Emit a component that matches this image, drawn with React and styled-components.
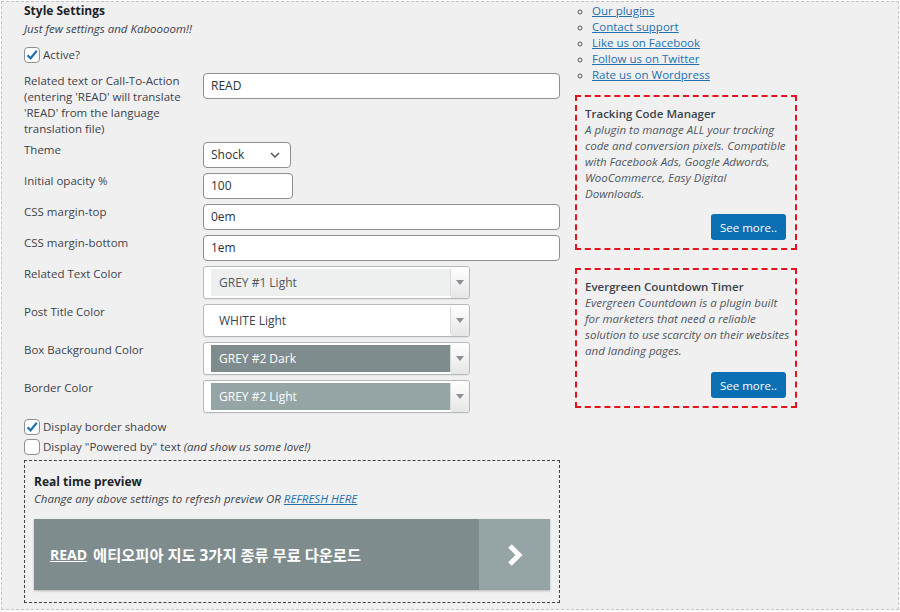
import React from 'react';
import styled, { createGlobalStyle } from 'styled-components';

const GlobalStyle = createGlobalStyle`
  body {
    margin: 0;
    background: #fff;
    font-family: "Open Sans", "Noto Sans", sans-serif;
    font-size: 11.5px;
    line-height: 16px;
    color: #3c434a;
  }
  * { box-sizing: border-box; }
`;

const Frame = styled.div`
  margin: 1px 1px 0;
  height: 609px;
  border: 1px dashed #c3c4c7;
  background: #f0f0f1;
  overflow: hidden;
  display: flex;
  gap: 15px;
  padding: 1px 0 0 22px;
`;

const Settings = styled.div`
  width: 536px;
  display: flex;
  flex-direction: column;
`;

const Heading = styled.h3`
  margin: 0;
  font-size: 12px;
  font-weight: 700;
  line-height: 16px;
  color: #1d2327;
`;

const Note = styled.p`
  margin: 2px 0 0;
  font-style: italic;
  color: #3c434a;
`;

const CheckRow = styled.label`
  display: flex;
  align-items: center;
  height: 16px;
  margin-top: ${p => p.$top || 0}px;
`;

const Box = styled.span`
  width: 16px;
  height: 16px;
  margin-right: 3px;
  border: 1px solid #8c8f94;
  border-radius: 4px;
  background: #fff;
  display: flex;
  align-items: center;
  justify-content: center;
  flex: none;
`;

const Form = styled.div`
  margin-top: 10px;
  display: grid;
  grid-template-columns: 179px 1fr;
  row-gap: 5px;
  align-items: start;
`;

const Label = styled.div`
  line-height: 16px;
`;

const TextInput = styled.div`
  width: ${p => p.$width || '100%'};
  height: 26px;
  border: 1px solid #8c8f94;
  border-radius: 4px;
  background: #fff;
  padding: 0 7px;
  display: flex;
  align-items: center;
  color: #2c3338;
  font-size: 12px;
`;

const Select = styled(TextInput)`
  justify-content: space-between;
  padding-right: 10px;
`;

const ColorSelect = styled.div`
  width: 267px;
  height: 33px;
  border: 1px solid #b4b9be;
  border-radius: 3px;
  background: #fff;
  display: flex;
  padding: 2px 0 2px 7px;
  box-shadow: 0 1px 1px rgba(0, 0, 0, 0.05);
`;

const Swatch = styled.div`
  flex: 1;
  background: ${p => p.$bg};
  color: ${p => p.$color};
  display: flex;
  align-items: center;
  padding-left: 8px;
  font-size: 12px;
  border-right: 1px solid #d8dbdd;
`;

const Arrow = styled.div`
  width: 18px;
  display: flex;
  align-items: center;
  justify-content: center;
  background: linear-gradient(#fff, #e6e6e6);
  margin: -2px 0;
  border-radius: 0 3px 3px 0;
`;

const Preview = styled.div`
  margin-top: 5px;
  border: 1px dashed #3c434a;
  padding: 13px 9px 12px 9px;
`;

const PreviewTitle = styled.div`
  font-weight: 700;
  font-size: 12px;
  color: #1d2327;
`;

const PreviewNote = styled.div`
  font-style: italic;
  margin-top: 1px;
  a { color: #2271b1; }
`;

const Banner = styled.div`
  margin-top: 12px;
  height: 71px;
  display: flex;
  box-shadow: 0 1px 2px rgba(0, 0, 0, 0.25);
`;

const BannerText = styled.div`
  flex: 1;
  background: #7f8c8d;
  color: #fff;
  display: flex;
  align-items: center;
  padding-left: 16px;
  font-family: "Open Sans", "Noto Sans CJK KR", sans-serif;
  font-weight: 700;
  font-size: 15.3px;
  span { text-decoration: underline; margin-right: 6px; font-size: 14px; }
`;

const BannerGo = styled.div`
  width: 71px;
  background: #95a5a6;
  display: flex;
  align-items: center;
  justify-content: center;
`;

const Side = styled.div`
  width: 222px;
  display: flex;
  flex-direction: column;
`;

const Links = styled.ul`
  margin: 0;
  padding-left: 17px;
  list-style: circle;
  li::marker { color: #50575e; font-size: 10px; }
  a { color: #2271b1; }
`;

const Promo = styled.div`
  margin-top: ${p => p.$top}px;
  border: 2px dashed #e3141c;
  padding: 9px 9px 8px 8px;
  display: flex;
  flex-direction: column;
`;

const PromoTitle = styled.div`
  font-weight: 600;
  color: #3c434a;
`;

const PromoText = styled.div`
  font-style: italic;
  color: #50575e;
  margin-right: -6px;
  white-space: nowrap;
`;

const SeeMore = styled.button`
  align-self: flex-end;
  margin-top: ${p => p.$top}px;
  height: 26px;
  padding: 0 9px;
  border: 0;
  border-radius: 3px;
  background: #0a6fb3;
  color: #fff;
  font-family: inherit;
  font-size: 11.5px;
`;

const Tick = () => (
  <svg width="14" height="14" viewBox="0 0 14 14">
    <path d="M2.5 7.2 L5.6 10.3 L11.8 2.8" fill="none" stroke="#2271b1" strokeWidth="2.2" />
  </svg>
);

const Check = ({ checked, top, children }) => (
  <CheckRow $top={top}>
    <Box>{checked && <Tick />}</Box>
    <span>{children}</span>
  </CheckRow>
);

const colorRows = [
  { label: 'Related Text Color', value: 'GREY #1 Light', bg: '#eef0f0', color: '#50575e' },
  { label: 'Post Title Color', value: 'WHITE Light', bg: '#fff', color: '#3c434a' },
  { label: 'Box Background Color', value: 'GREY #2 Dark', bg: '#7f8c8d', color: '#fff' },
  { label: 'Border Color', value: 'GREY #2 Light', bg: '#95a5a6', color: '#fff' },
];

// descriptions keep the plugin page's own line breaks
const promos = [
  {
    title: 'Tracking Code Manager',
    lines: [
      'A plugin to manage ALL your tracking',
      'code and conversion pixels. Compatible',
      'with Facebook Ads, Google Adwords,',
      'WooCommerce, Easy Digital',
      'Downloads.',
    ],
    top: 12,
    btn: 12,
  },
  {
    title: 'Evergreen Countdown Timer',
    lines: [
      'Evergreen Countdown is a plugin built',
      'for marketers that need a reliable',
      'solution to use scarcity on their websites',
      'and landing pages.',
    ],
    top: 18,
    btn: 13,
  },
];

const App = () => (
  <>
    <GlobalStyle />
    <Frame>
      <Settings>
        <Heading>Style Settings</Heading>
        <Note>Just few settings and Kaboooom!!</Note>
        <Check checked top={10}>Active?</Check>

        <Form>
          <Label>
            Related text or Call-To-Action<br />
            (entering 'READ' will translate<br />
            'READ' from the language<br />
            translation file)
          </Label>
          <TextInput>READ</TextInput>

          <Label>Theme</Label>
          <Select $width="88px">
            Shock
            <svg width="10" height="6" viewBox="0 0 10 6">
              <path d="M1 1 L5 5 L9 1" fill="none" stroke="#50575e" strokeWidth="1.5" />
            </svg>
          </Select>

          <Label>Initial opacity %</Label>
          <TextInput $width="90px">100</TextInput>

          <Label>CSS margin-top</Label>
          <TextInput>0em</TextInput>

          <Label>CSS margin-bottom</Label>
          <TextInput>1em</TextInput>

          {colorRows.map(row => (
            <React.Fragment key={row.label}>
              <Label>{row.label}</Label>
              <ColorSelect>
                <Swatch $bg={row.bg} $color={row.color}>{row.value}</Swatch>
                <Arrow>
                  <svg width="8" height="5" viewBox="0 0 8 5">
                    <path d="M0 0 H8 L4 5 Z" fill="#8c8f94" />
                  </svg>
                </Arrow>
              </ColorSelect>
            </React.Fragment>
          ))}
        </Form>

        <Check checked top={6}>Display border shadow</Check>
        <Check top={4}>
          Display "Powered by" text <em>(and show us some love!)</em>
        </Check>

        <Preview>
          <PreviewTitle>Real time preview</PreviewTitle>
          <PreviewNote>
            Change any above settings to refresh preview OR <a href="#">REFRESH HERE</a>
          </PreviewNote>
          <Banner>
            <BannerText>
              <span>READ</span>에티오피아 지도 3가지 종류 무료 다운로드
            </BannerText>
            <BannerGo>
              <svg width="18" height="24" viewBox="0 0 18 24">
                <path d="M4 3 L13 12 L4 21" fill="none" stroke="#fff" strokeWidth="5" strokeLinejoin="miter" />
              </svg>
            </BannerGo>
          </Banner>
        </Preview>
      </Settings>

      <Side>
        <Links>
          <li><a href="#">Our plugins</a></li>
          <li><a href="#">Contact support</a></li>
          <li><a href="#">Like us on Facebook</a></li>
          <li><a href="#">Follow us on Twitter</a></li>
          <li><a href="#">Rate us on Wordpress</a></li>
        </Links>

        {promos.map(p => (
          <Promo key={p.title} $top={p.top}>
            <PromoTitle>{p.title}</PromoTitle>
            <PromoText>
              {p.lines.map(line => <div key={line}>{line}</div>)}
            </PromoText>
            <SeeMore $top={p.btn}>See more..</SeeMore>
          </Promo>
        ))}
      </Side>
    </Frame>
  </>
);

export default App;
